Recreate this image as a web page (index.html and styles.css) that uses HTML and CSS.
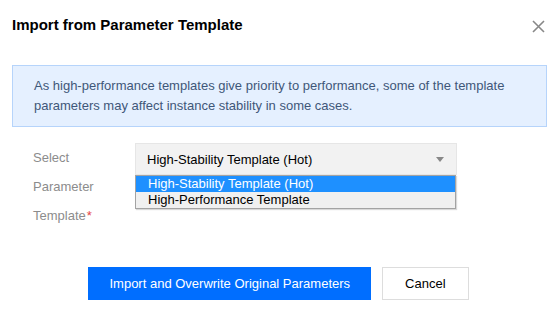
FILE: index.html
```html
<!DOCTYPE html>
<html lang="en">
<head>
<meta charset="utf-8">
<title>Import from Parameter Template</title>
<link rel="stylesheet" href="styles.css">
</head>
<body>
<div class="dialog">
  <div class="header">
    <h1 class="title">Import from Parameter Template</h1>
    <span class="close" aria-label="Close">
      <svg width="13" height="13" viewBox="0 0 13 13"><path d="M1 1 L12 12 M12 1 L1 12" stroke="#888" stroke-width="1.6" fill="none"/></svg>
    </span>
  </div>
  <div class="alert">As high-performance templates give priority to performance, some of the template parameters may affect instance stability in some cases.</div>
  <div class="form-row">
    <div class="label"><span class="label-line">Select</span><span class="label-line">Parameter</span><span class="label-line">Template<span class="req">*</span></span></div>
    <div class="select-wrap">
      <div class="select">
        <span class="select-value">High-Stability Template (Hot)</span>
        <span class="arrow"></span>
      </div>
      <ul class="options">
        <li class="option selected">High-Stability Template (Hot)</li>
        <li class="option">High-Performance Template</li>
      </ul>
    </div>
  </div>
  <div class="footer">
    <button class="btn btn-primary">Import and Overwrite Original Parameters</button>
    <button class="btn btn-default">Cancel</button>
  </div>
</div>
</body>
</html>
```

FILE: styles.css
```css
html, body {
  margin: 0;
  padding: 0;
  background: #fff;
}
body {
  font-family: "Liberation Sans", Arial, sans-serif;
  color: #000;
}
.dialog {
  padding: 12px 10px 0 12px;
}
.header {
  display: flex;
  justify-content: space-between;
  align-items: center;
}
.title {
  margin: 0;
  font-size: 15px;
  font-weight: bold;
  line-height: 25px;
  color: #000;
}
.close {
  display: flex;
  margin-top: 3px;
}
.alert {
  margin-top: 28px;
  margin-right: -2px;
  background: #e5f0ff;
  border: 1px solid #b6d4fb;
  padding: 10px 20px 10px 21px;
  font-size: 13px;
  line-height: 20px;
  color: #3f5779;
}
.form-row {
  display: flex;
  margin-top: 16px;
  padding-left: 21px;
}
.label {
  display: flex;
  flex-direction: column;
  width: 75px;
  margin-right: 27px;
  font-size: 13px;
  line-height: 29px;
  color: #8c8c8c;
}
.req {
  color: #e54545;
  margin-left: 1px;
}
.select-wrap {
  position: relative;
  width: 322px;
}
.select {
  box-sizing: border-box;
  height: 32px;
  display: flex;
  align-items: center;
  justify-content: space-between;
  padding: 0 12px 0 11px;
  background: #f2f2f2;
  border: 1px solid #e6e6e6;
  font-size: 13px;
  color: #000;
}
.arrow {
  width: 0;
  height: 0;
  border-left: 4px solid transparent;
  border-right: 4px solid transparent;
  border-top: 5px solid #888;
}
.options {
  position: absolute;
  top: 32px;
  left: 0;
  width: 321px;
  box-sizing: border-box;
  margin: 0;
  padding: 0;
  list-style: none;
  border: 1px solid #a3a3a3;
  background: #f0f0f0;
  box-shadow: 1px 1px 1px rgba(0, 0, 0, 0.15);
}
.option {
  font-size: 13px;
  line-height: 16px;
  padding-left: 12px;
  color: #000;
}
.option.selected {
  background: #1e90ff;
  color: #fff;
}
.footer {
  display: flex;
  justify-content: center;
  gap: 11px;
  margin-top: 37px;
}
.btn {
  height: 33px;
  box-sizing: border-box;
  font-family: "Liberation Sans", Arial, sans-serif;
  font-size: 13px;
  padding: 0 20px;
  border: 1px solid;
  cursor: pointer;
}
.btn-primary {
  background: #006eff;
  border-color: #006eff;
  color: #fff;
}
.btn-default {
  background: #fff;
  border-color: #dddddd;
  color: #000;
  padding: 0 22px;
}
```
